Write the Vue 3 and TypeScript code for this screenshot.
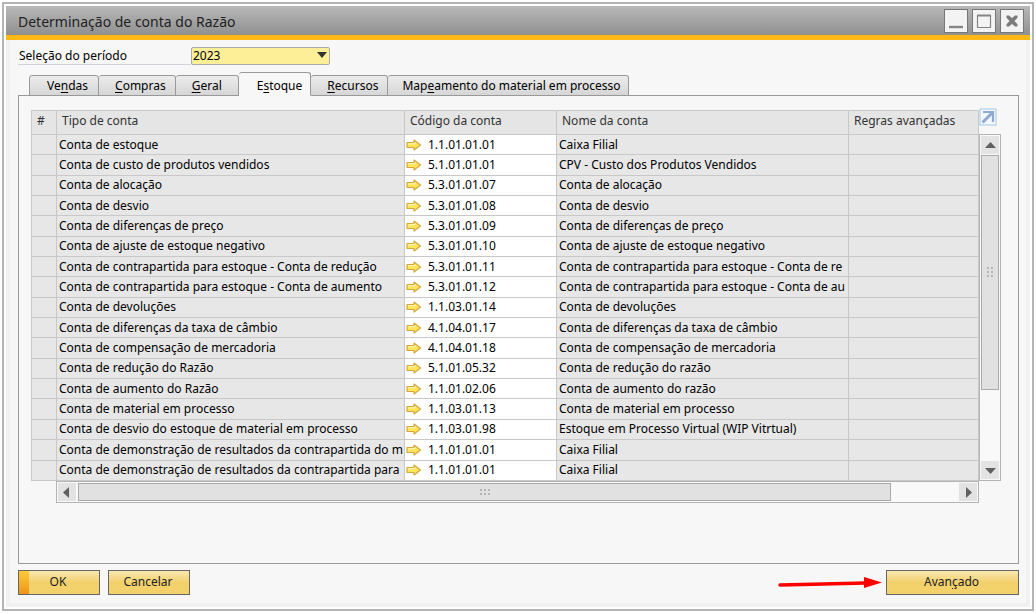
<script setup lang="ts">
import { ref } from 'vue'

interface Tab { before: string; key: string; after: string }
interface Account { type: string; code: string; name: string }

const period = ref('2023')
const active = ref(3)

const tabs: Tab[] = [
  { before: 'Ve', key: 'n', after: 'das' },
  { before: '', key: 'C', after: 'ompras' },
  { before: '', key: 'G', after: 'eral' },
  { before: 'E', key: 's', after: 'toque' },
  { before: '', key: 'R', after: 'ecursos' },
  { before: 'Map', key: 'e', after: 'amento do material em processo' },
]

const rows: Account[] = [
  { type: 'Conta de estoque', code: '1.1.01.01.01', name: 'Caixa Filial' },
  { type: 'Conta de custo de produtos vendidos', code: '5.1.01.01.01', name: 'CPV - Custo dos Produtos Vendidos' },
  { type: 'Conta de alocação', code: '5.3.01.01.07', name: 'Conta de alocação' },
  { type: 'Conta de desvio', code: '5.3.01.01.08', name: 'Conta de desvio' },
  { type: 'Conta de diferenças de preço', code: '5.3.01.01.09', name: 'Conta de diferenças de preço' },
  { type: 'Conta de ajuste de estoque negativo', code: '5.3.01.01.10', name: 'Conta de ajuste de estoque negativo' },
  { type: 'Conta de contrapartida para estoque - Conta de redução', code: '5.3.01.01.11', name: 'Conta de contrapartida para estoque - Conta de re' },
  { type: 'Conta de contrapartida para estoque - Conta de aumento', code: '5.3.01.01.12', name: 'Conta de contrapartida para estoque - Conta de au' },
  { type: 'Conta de devoluções', code: '1.1.03.01.14', name: 'Conta de devoluções' },
  { type: 'Conta de diferenças da taxa de câmbio', code: '4.1.04.01.17', name: 'Conta de diferenças da taxa de câmbio' },
  { type: 'Conta de compensação de mercadoria', code: '4.1.04.01.18', name: 'Conta de compensação de mercadoria' },
  { type: 'Conta de redução do Razão', code: '5.1.01.05.32', name: 'Conta de redução do razão' },
  { type: 'Conta de aumento do Razão', code: '1.1.01.02.06', name: 'Conta de aumento do razão' },
  { type: 'Conta de material em processo', code: '1.1.03.01.13', name: 'Conta de material em processo' },
  { type: 'Conta de desvio do estoque de material em processo', code: '1.1.03.01.98', name: 'Estoque em Processo Virtual (WIP Vitrtual)' },
  { type: 'Conta de demonstração de resultados da contrapartida do m', code: '1.1.01.01.01', name: 'Caixa Filial' },
  { type: 'Conta de demonstração de resultados da contrapartida para', code: '1.1.01.01.01', name: 'Caixa Filial' },
]
</script>

<template>
  <div class="screen">
    <main class="window">
      <header class="titlebar">
        <h1>Determinação de conta do Razão</h1>
        <div class="controls">
          <button type="button" aria-label="Minimizar">
            <svg viewBox="0 0 22 22"><path d="M4 17h14" stroke="#858585" stroke-width="2.4" /></svg>
          </button>
          <button type="button" aria-label="Maximizar">
            <svg viewBox="0 0 22 22"><path d="M4.500 5.500h13v12h-13z" fill="none" stroke="#858585" stroke-width="1.200" /><path d="M4 5.500h14" stroke="#858585" stroke-width="2" /></svg>
          </button>
          <button type="button" aria-label="Fechar">
            <svg viewBox="0 0 22 22"><path d="M5.500 5.500h2.500l3 2.500 3-2.500h2.500v2.200L13.500 11l3 3.300v2.200H14L11 14l-3 2.500H5.500v-2.200l3-3.300-3-3.300z" fill="#7c7c7c" /></svg>
          </button>
        </div>
      </header>

      <div class="body">
        <div class="period">
          <label for="period">Seleção do período</label>
          <div class="select">
            <select id="period" v-model="period"><option>2023</option></select>
            <svg viewBox="0 0 10 6"><path d="M0 0h10L5 6z" fill="#333" /></svg>
          </div>
        </div>

        <nav class="tabs" role="tablist">
          <button
            v-for="(tab, i) in tabs" :key="i" type="button" role="tab" class="tab"
            :class="{ active: i === active }" :aria-selected="i === active" @click="active = i"
          >{{ tab.before }}<u>{{ tab.key }}</u>{{ tab.after }}</button>
        </nav>

        <section class="panel">
          <div class="matrix">
            <table>
              <colgroup>
                <col class="c-num"><col class="c-type"><col class="c-code"><col class="c-name"><col class="c-rules">
              </colgroup>
              <thead>
                <tr><th>#</th><th>Tipo de conta</th><th>Código da conta</th><th>Nome da conta</th><th>Regras avançadas</th></tr>
              </thead>
              <tbody>
                <tr v-for="(row, i) in rows" :key="i">
                  <td></td>
                  <td>{{ row.type }}</td>
                  <td class="code">
                    <div>
                      <button type="button" class="link" :aria-label="'Abrir conta ' + row.code">
                        <svg viewBox="0 0 16 12"><path d="M1 3.500h7V1l6.500 5L8 11V8.500H1z" fill="#ffe45c" stroke="#d4a83c" stroke-width="1.2" stroke-linejoin="round" /><path d="M2 4.800h7V3.200" fill="none" stroke="#fff6b8" stroke-width="1" /></svg>
                      </button>
                      <span>{{ row.code }}</span>
                    </div>
                  </td>
                  <td>{{ row.name }}</td>
                  <td></td>
                </tr>
              </tbody>
            </table>

            <button type="button" class="expand" aria-label="Expandir tabela">
              <svg viewBox="0 0 18 18"><path d="M1 1h16v16H1z" fill="#f2f8fd" stroke="#bcd8ee" stroke-width="1.500" /><path d="M4 4h10v10" fill="none" stroke="#8fa9d2" stroke-width="2.200" /><path d="M3.500 14.500L13 5" stroke="#8fa9d2" stroke-width="3" /></svg>
            </button>

            <div class="vbar">
              <button type="button" aria-label="Rolar para cima"><svg viewBox="0 0 18 18"><path d="M4 12h11L9.500 6z" fill="#606060" /></svg></button>
              <div class="track"><div class="thumb"><i v-for="n in 6" :key="n"></i></div></div>
              <button type="button" aria-label="Rolar para baixo"><svg viewBox="0 0 18 18"><path d="M4 7h11l-5.500 6z" fill="#606060" /></svg></button>
            </div>

            <div class="hbar">
              <button type="button" aria-label="Rolar para a esquerda"><svg viewBox="0 0 18 18"><path d="M11 4v11L5 9.500z" fill="#606060" /></svg></button>
              <div class="track"><div class="thumb"><i v-for="n in 6" :key="n"></i></div></div>
              <button type="button" aria-label="Rolar para a direita"><svg viewBox="0 0 18 18"><path d="M7 4v11l6-5.500z" fill="#606060" /></svg></button>
            </div>
          </div>
        </section>

        <footer class="actions">
          <button type="button" class="btn primary">OK</button>
          <button type="button" class="btn">Cancelar</button>
          <svg class="pointer" viewBox="0 0 106 14" aria-hidden="true"><path d="M2 9L88 7" stroke="#f00" stroke-width="3.500" stroke-linecap="round" /><path d="M86 1l18 5.500L86 12z" fill="#f00" /></svg>
          <button type="button" class="btn wide">Avan<u>ç</u>ado</button>
        </footer>
      </div>
    </main>
  </div>
</template>

<style>
body { background: #fff; }
</style>

<style scoped>
* { box-sizing: border-box; }
.screen {
  display: flex;
  min-height: 100vh;
  padding: 2px 2px 3px;
  font-family: "Noto Sans", sans-serif;
  font-size: 12px;
  line-height: 16px;
  color: #000;
}
button { margin: 0; padding: 0; border: 0; font: inherit; color: inherit; background: none; }
svg { display: block; }
u { text-underline-offset: 2px; }
.window {
  flex: 1;
  min-width: 0;
  display: flex;
  flex-direction: column;
  border: 2px solid #b4b4b4;
  padding: 2px;
}
.titlebar {
  display: flex;
  align-items: center;
  justify-content: space-between;
  height: 34px;
  padding: 0 6px 0 12px;
  background: linear-gradient(#b8b8b8, #909090);
  border-bottom: 5px solid #fcb813;
}
h1 { margin: 0; padding-top: 2px; font-size: 14px; line-height: 20px; font-weight: 400; color: #222; }
.controls { display: flex; gap: 4px; }
.controls button { width: 24px; height: 24px; background: #f3f3f3; border: 1px solid #777; }
.body {
  flex: 1;
  display: flex;
  flex-direction: column;
  padding: 7px 7px 8px 8px;
  background: #f7f7f7;
  border: solid #f1f1f1;
  border-width: 0 4px 4px;
}
.period { display: flex; height: 18px; }
.period label { width: 173px; padding-left: 1px; border-bottom: 1px solid #d0d4da; line-height: 18px; }
.select { position: relative; width: 139px; }
.select select {
  width: 100%; height: 18px; padding: 0 1px; appearance: none;
  border: 1px solid #aaa; border-radius: 2px; background: #fdee98; font: inherit; color: inherit;
}
.select svg { position: absolute; right: 3px; top: 5px; width: 10px; height: 6px; pointer-events: none; }
.tabs { position: relative; z-index: 1; display: flex; align-items: flex-end; height: 24px; margin: 7px 0 0 11px; }
.tab {
  height: 21px; min-width: 63px; padding: 0 9px 0 16px; white-space: nowrap; text-align: left;
  border: 1px solid #999; border-left-width: 0; border-radius: 3px 3px 0 0;
  background: linear-gradient(#ececec, #d6d6d6);
}
.tab:first-child { border-left-width: 1px; padding: 0 10px 0 17px; }
.tab:last-child { padding: 0 7px 0 14px; }
.tab.active { height: 24px; padding: 4px 8px 0 18px; background: #f7f7f7; border-bottom-color: #f7f7f7; }
.panel {
  flex: 1; display: flex; margin-top: -1px; padding: 14px 17px 60px 12px;
  border: 1px solid #999;
}
.matrix {
  flex: 1; display: grid; min-width: 0;
  grid-template-columns: 1fr 22px;
  grid-template-rows: 24px 1fr 22px;
}
table {
  grid-area: 1 / 1 / 3 / 2; width: 100%; height: 100%;
  table-layout: fixed; border-collapse: collapse; background: #e7e7e7;
}
.c-num { width: 25px; }
.c-type { width: 348px; }
.c-code { width: 152px; }
.c-rules { width: 130px; }
th, td {
  padding: 0 2px; border: 1px solid #c8c8c8; text-align: left; font-weight: 400;
  overflow: hidden; white-space: nowrap;
}
th { height: 24px; padding: 0 4px 4px 5px; color: #333; background: #e5e5e5; }
.code { background: #fff; padding: 0 1px; }
.code div { display: flex; align-items: center; gap: 6px; }
.link svg { width: 16px; height: 12px; }
.expand { width: 18px; height: 18px; margin-top: -2px; }
.expand svg { width: 18px; height: 18px; }
.vbar, .hbar { display: flex; background: #f9f9f9; border: 1px solid #b4b4b4; }
.vbar { grid-area: 2 / 2; flex-direction: column; padding: 1px; gap: 1px; }
.hbar { grid-area: 3 / 1; margin-left: 25px; padding: 1px; gap: 2px; }
.vbar button, .hbar button { width: 18px; height: 18px; background: #e3e3e3; }
.track { flex: 1; min-width: 0; min-height: 0; }
.thumb {
  display: grid; place-content: center; gap: 2px;
  background: #e1e1e1; border: 1px solid #aaa;
}
.vbar .thumb { height: 77%; grid-template-columns: 2px 2px; }
.hbar .thumb { width: 92.5%; height: 18px; grid-template-columns: 2px 2px 2px; }
.thumb i { width: 2px; height: 2px; background: #b5b5b5; }
.actions { display: flex; align-items: center; gap: 8px; margin-top: 6px; }
.btn {
  width: 82px; height: 25px; padding: 0 2px 2px 0; border: 1px solid #666; color: #222;
  background: linear-gradient(#f9e8b0, #f2d06c 50%, #f4d26a);
}
.primary { background: linear-gradient(#fccb3a, #f09418) left / 10px 100% no-repeat, linear-gradient(#f9e8b0, #f2d06c 50%, #f4d26a); }
.wide { width: 133px; }
.pointer { width: 106px; height: 14px; margin: 0 -6px 0 auto; }
</style>
